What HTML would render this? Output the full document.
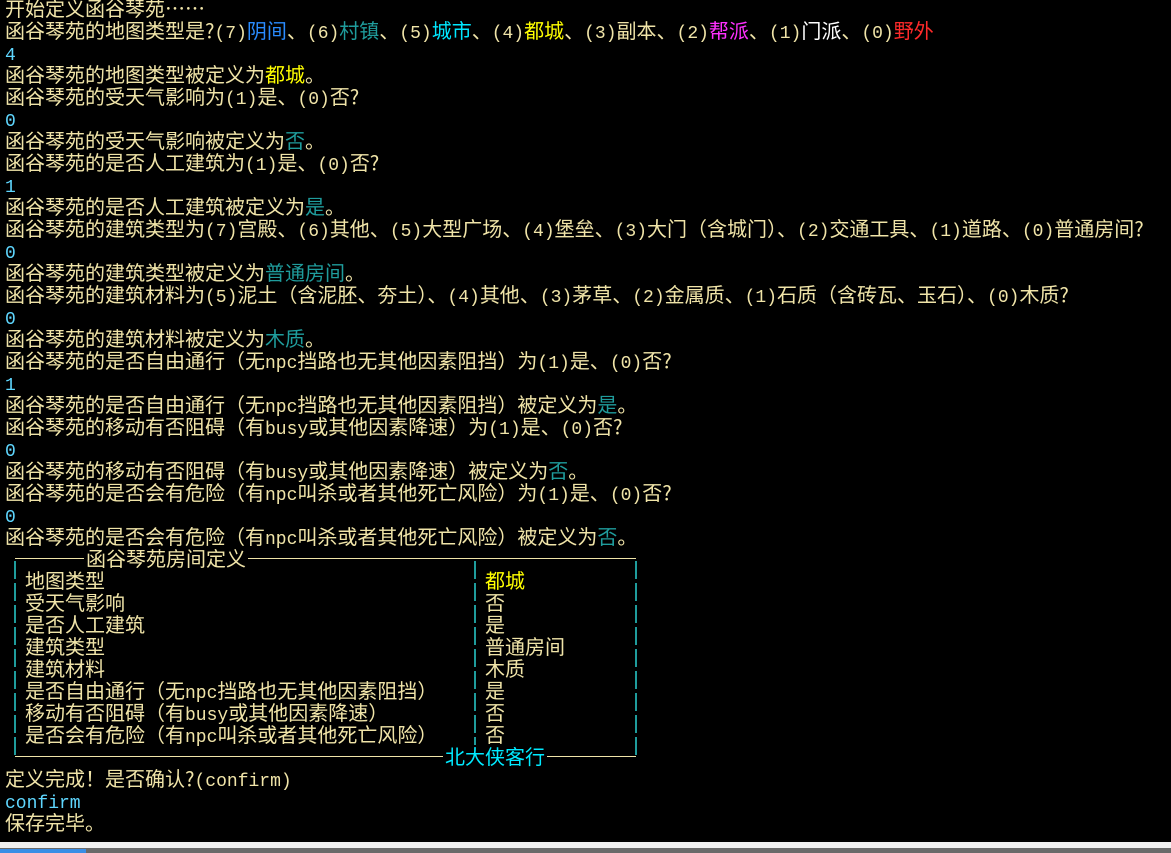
<!DOCTYPE html><html><head><meta charset="utf-8"><style>
body{margin:0;width:1171px;height:853px;background:#000;overflow:hidden;position:relative;font-family:"Noto Sans CJK SC","WenQuanYi Zen Hei",sans-serif;font-size:20px;color:#f0e4a8}
.t{position:absolute;left:5px;top:-3px}
.t div,.bx div{height:22px;line-height:22px;white-space:pre;overflow:visible}
.a{font-family:"Liberation Mono",monospace;font-size:18px;line-height:0}
.c{color:#5fd7ff}.tl{color:#1f9c9c}.b{color:#2a8cff}.cy{color:#00e8ff}.y{color:#ffff00}.m{color:#ff30ff}.w{color:#fff}.r{color:#ff2a2a}
.hl{position:absolute;height:1px;background:#f0e4a8}
.vl{position:absolute;width:2px;background:repeating-linear-gradient(180deg,transparent 0,transparent 3px,#1f9c9c 3px,#1f9c9c 21px,transparent 21px,transparent 22px)}
.bx{position:absolute}
.lab{position:absolute;line-height:22px;height:22px;white-space:pre;background:#000;padding:0 2px}
</style></head><body>
<div class="t">
<div>开始定义函谷琴苑……</div>
<div>函谷琴苑的地图类型是?<span class="a">(7)</span><span class="b">阴间</span>、<span class="a">(6)</span><span class="tl">村镇</span>、<span class="a">(5)</span><span class="cy">城市</span>、<span class="a">(4)</span><span class="y">都城</span>、<span class="a">(3)</span>副本、<span class="a">(2)</span><span class="m">帮派</span>、<span class="a">(1)</span><span class="w">门派</span>、<span class="a">(0)</span><span class="r">野外</span></div>
<div><span class="a c">4</span></div>
<div>函谷琴苑的地图类型被定义为<span class="y">都城</span>。</div>
<div>函谷琴苑的受天气影响为<span class="a">(1)</span>是、<span class="a">(0)</span>否?</div>
<div><span class="a c">0</span></div>
<div>函谷琴苑的受天气影响被定义为<span class="tl">否</span>。</div>
<div>函谷琴苑的是否人工建筑为<span class="a">(1)</span>是、<span class="a">(0)</span>否?</div>
<div><span class="a c">1</span></div>
<div>函谷琴苑的是否人工建筑被定义为<span class="tl">是</span>。</div>
<div>函谷琴苑的建筑类型为<span class="a">(7)</span>宫殿、<span class="a">(6)</span>其他、<span class="a">(5)</span>大型广场、<span class="a">(4)</span>堡垒、<span class="a">(3)</span>大门（含城门）、<span class="a">(2)</span>交通工具、<span class="a">(1)</span>道路、<span class="a">(0)</span>普通房间?</div>
<div><span class="a c">0</span></div>
<div>函谷琴苑的建筑类型被定义为<span class="tl">普通房间</span>。</div>
<div>函谷琴苑的建筑材料为<span class="a">(5)</span>泥土（含泥胚、夯土）、<span class="a">(4)</span>其他、<span class="a">(3)</span>茅草、<span class="a">(2)</span>金属质、<span class="a">(1)</span>石质（含砖瓦、玉石）、<span class="a">(0)</span>木质?</div>
<div><span class="a c">0</span></div>
<div>函谷琴苑的建筑材料被定义为<span class="tl">木质</span>。</div>
<div>函谷琴苑的是否自由通行（无<span class="a">npc</span>挡路也无其他因素阻挡）为<span class="a">(1)</span>是、<span class="a">(0)</span>否?</div>
<div><span class="a c">1</span></div>
<div>函谷琴苑的是否自由通行（无<span class="a">npc</span>挡路也无其他因素阻挡）被定义为<span class="tl">是</span>。</div>
<div>函谷琴苑的移动有否阻碍（有<span class="a">busy</span>或其他因素降速）为<span class="a">(1)</span>是、<span class="a">(0)</span>否?</div>
<div><span class="a c">0</span></div>
<div>函谷琴苑的移动有否阻碍（有<span class="a">busy</span>或其他因素降速）被定义为<span class="tl">否</span>。</div>
<div>函谷琴苑的是否会有危险（有<span class="a">npc</span>叫杀或者其他死亡风险）为<span class="a">(1)</span>是、<span class="a">(0)</span>否?</div>
<div><span class="a c">0</span></div>
<div>函谷琴苑的是否会有危险（有<span class="a">npc</span>叫杀或者其他死亡风险）被定义为<span class="tl">否</span>。</div>
<div></div><div></div><div></div><div></div><div></div><div></div><div></div><div></div><div></div><div></div>
<div>定义完成！是否确认?<span class="a">(confirm)</span></div>
<div><span class="a c">confirm</span></div>
<div>保存完毕。</div>
</div>
<div class="hl" style="left:15px;top:558px;width:621px"></div>
<div class="hl" style="left:15px;top:756px;width:621px"></div>
<div class="vl" style="left:14px;top:558px;height:198px"></div>
<div class="vl" style="left:474px;top:558px;height:198px"></div>
<div class="vl" style="left:635px;top:558px;height:198px"></div>
<div class="lab" style="left:84px;top:547px">函谷琴苑房间定义</div>
<div class="lab" style="left:443px;top:745px;color:#00eaff">北大侠客行</div>
<div class="bx" style="left:25px;top:569px">
<div>地图类型</div>
<div>受天气影响</div>
<div>是否人工建筑</div>
<div>建筑类型</div>
<div>建筑材料</div>
<div>是否自由通行（无<span class="a">npc</span>挡路也无其他因素阻挡）</div>
<div>移动有否阻碍（有<span class="a">busy</span>或其他因素降速）</div>
<div>是否会有危险（有<span class="a">npc</span>叫杀或者其他死亡风险）</div>
</div>
<div class="bx" style="left:485px;top:569px">
<div><span class="y">都城</span></div>
<div>否</div><div>是</div><div>普通房间</div><div>木质</div><div>是</div><div>否</div><div>否</div>
</div>
<div style="position:absolute;left:0;top:842px;width:1171px;height:6px;background:#f0f0f0"></div>
<div style="position:absolute;left:0;top:848px;width:1171px;height:5px;background:#6a6a6a"></div>
<div style="position:absolute;left:0;top:849px;width:86px;height:4px;background:#3a8ee6"></div>
</body></html>
